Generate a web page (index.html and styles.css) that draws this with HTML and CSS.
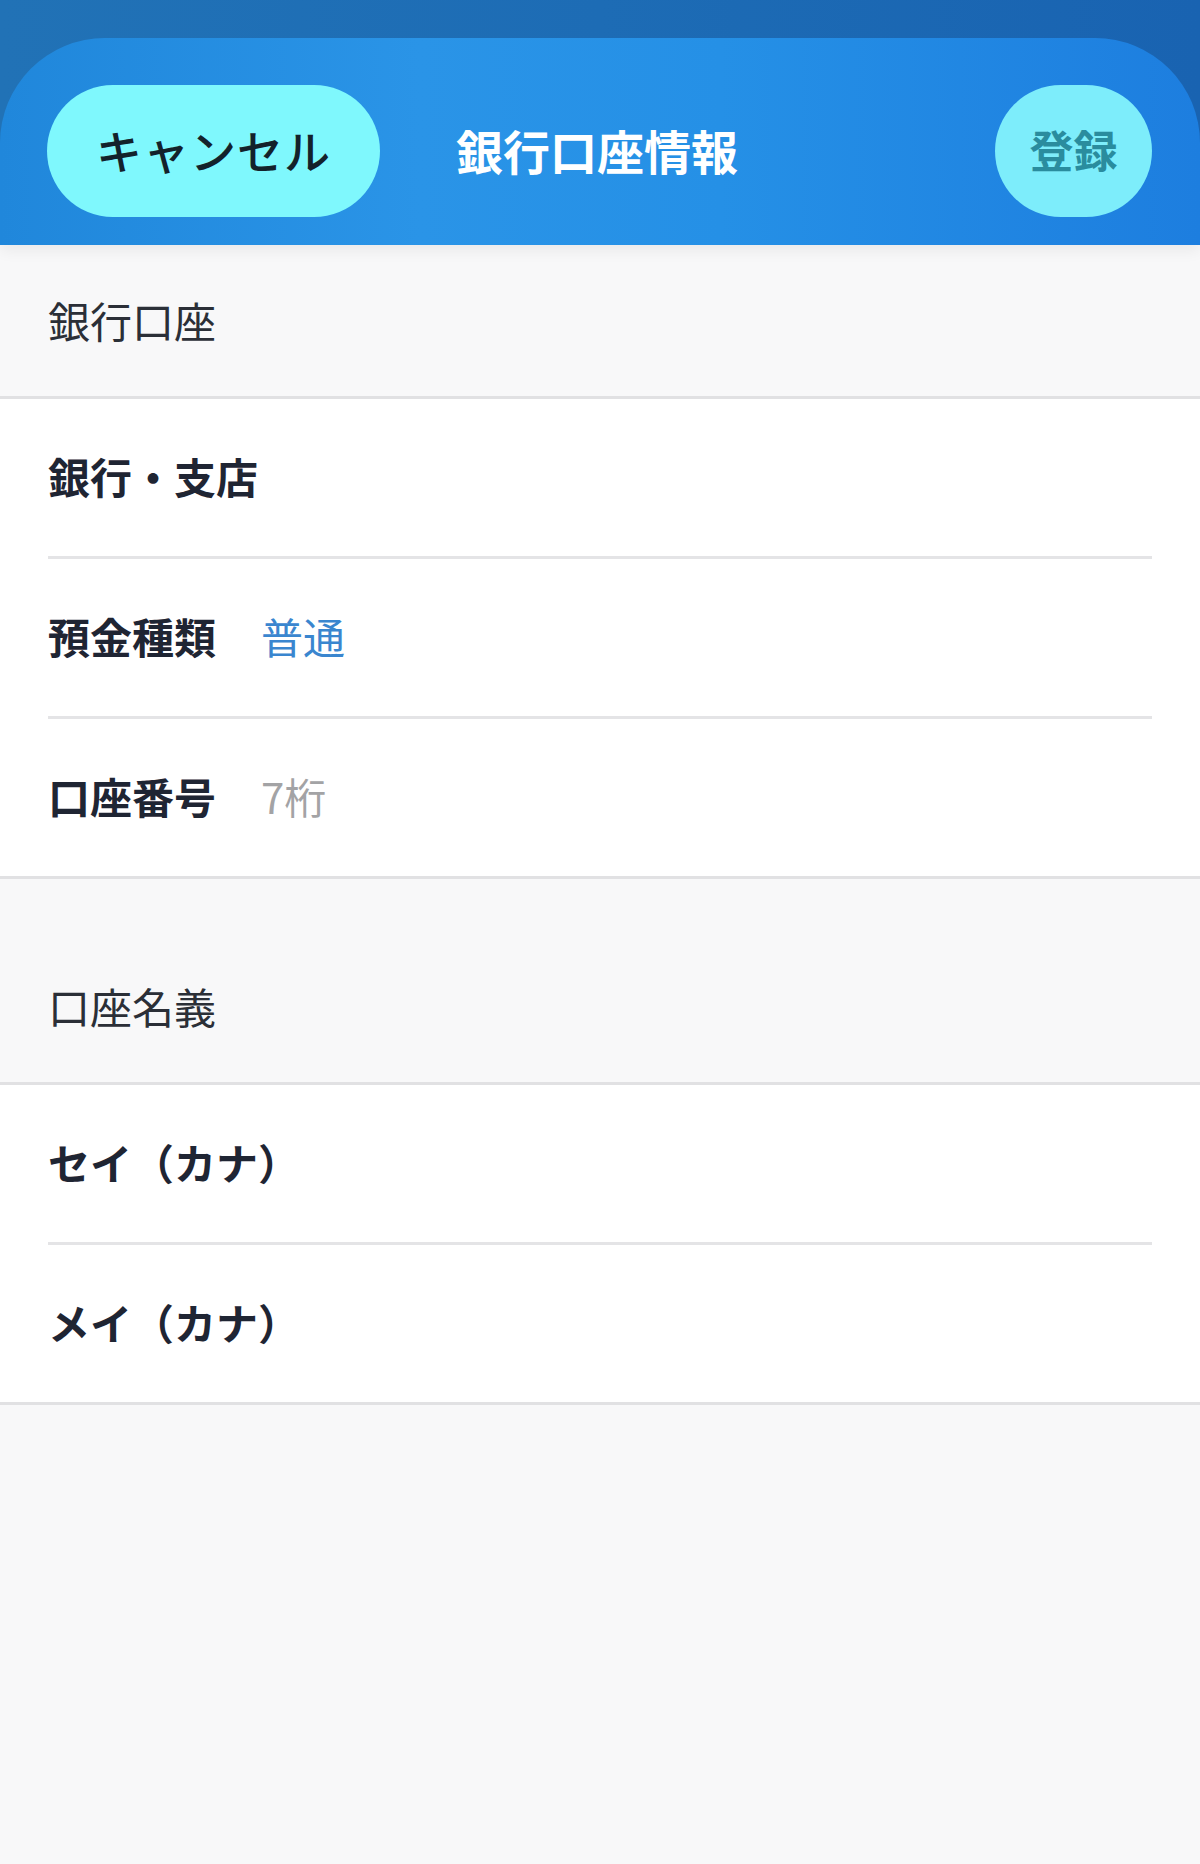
FILE: index.html
```html
<!DOCTYPE html>
<html lang="ja">
<head>
<meta charset="utf-8">
<title>銀行口座情報</title>
<link rel="stylesheet" href="styles.css">
</head>
<body>
<header class="topbar">
  <div class="card">
    <button class="btn-cancel">キャンセル</button>
    <h1 class="title">銀行口座情報</h1>
    <button class="btn-save">登録</button>
  </div>
</header>
<main>
  <section class="group">
    <div class="group-head">銀行口座</div>
    <div class="rows">
      <div class="row"><span class="label">銀行・支店</span></div>
      <div class="row"><span class="label">預金種類</span><span class="value value-blue">普通</span></div>
      <div class="row"><span class="label">口座番号</span><span class="value value-gray">7桁</span></div>
    </div>
  </section>
  <section class="group group-second">
    <div class="group-head">口座名義</div>
    <div class="rows">
      <div class="row"><span class="label">セイ（カナ）</span></div>
      <div class="row"><span class="label">メイ（カナ）</span></div>
    </div>
  </section>
</main>
</body>
</html>
```
FILE: styles.css
```css
* { box-sizing: border-box; }
html, body {
  margin: 0;
  padding: 0;
}
body {
  background: #f8f8f9;
  font-family: "Noto Sans CJK JP", "Noto Sans", sans-serif;
  min-height: 1864px;
}
.topbar {
  background: linear-gradient(90deg, #2172b6 0%, #1d6cb5 50%, #1963b1 100%);
  padding-top: 38px;
  position: relative;
  z-index: 1;
  box-shadow: 0 6px 14px rgba(0, 0, 0, 0.06);
}
.card {
  height: 207px;
  border-radius: 105px 105px 0 0;
  background: linear-gradient(90deg, #2087db 0%, #2a94e7 35%, #2590e6 60%, #1d7edf 100%);
  display: flex;
  align-items: flex-start;
  padding: 47px 48px 0 47px;
}
.btn-cancel, .btn-save {
  border: none;
  font-family: inherit;
  height: 132px;
  border-radius: 66px;
  padding: 0 0 4px 0;
  cursor: pointer;
}
.btn-cancel {
  width: 333px;
  background: #7ff8fd;
  color: #13222b;
  font-size: 46px;
  font-weight: 500;
  letter-spacing: 1px;
}
.btn-save {
  width: 157px;
  margin-left: auto;
  background: #7dedfb;
  color: #2a8c9e;
  font-size: 44px;
  font-weight: 700;
}
.title {
  margin: 0 0 0 76px;
  height: 132px;
  padding-bottom: 4px;
  display: flex;
  align-items: center;
  color: #ffffff;
  font-size: 47px;
  font-weight: 700;
}
.group-head {
  height: 154px;
  display: flex;
  align-items: center;
  padding-left: 48px;
  padding-bottom: 3px;
  font-size: 42px;
  color: #2b2f37;
  border-bottom: 3px solid #e1e1e3;
}
.group-second {
  margin-top: 52px;
}
.rows {
  background: #ffffff;
  padding-left: 48px;
  border-bottom: 3px solid #e1e1e3;
}
.row {
  height: 160px;
  display: flex;
  align-items: center;
  padding-bottom: 5px;
  border-bottom: 3px solid #e4e4e6;
  margin-right: 48px;
}
.row:last-child {
  border-bottom: none;
  height: 157px;
}
.label {
  font-size: 42px;
  font-weight: 700;
  color: #1f2533;
  min-width: 213px;
  white-space: nowrap;
}
.value {
  font-size: 42px;
  font-weight: 400;
}
.value-blue { color: #3a86cf; }
.value-gray { color: #a3a3a5; }
```
